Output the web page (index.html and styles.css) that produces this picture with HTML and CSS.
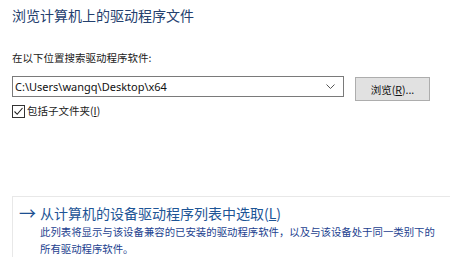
FILE: index.html
```html
<!DOCTYPE html>
<html lang="zh-CN">
<head>
    <meta charset="UTF-8">
    <title>浏览计算机上的驱动程序文件</title>
    <link rel="stylesheet" href="styles.css">
</head>
<body>
    <div class="page">
        <h1 class="title">浏览计算机上的驱动程序文件</h1>
        <div class="search">
            <label class="search-label" for="path">在以下位置搜索驱动程序软件:</label>
            <div class="search-row">
                <div class="combo">
                    <input type="text" id="path" value="C:\Users\wangq\Desktop\x64">
                    <svg class="chevron" width="9" height="6" viewBox="0 0 9 6"><path d="M0.5 0.5 L4.5 4.5 L8.5 0.5" fill="none" stroke="#555" stroke-width="1"/></svg>
                </div>
                <button class="browse-btn">浏览(<u>R</u>)...</button>
            </div>
            <label class="check">
                <span class="box"><svg width="11" height="11" viewBox="0 0 11 11"><path d="M1.5 5.5 L4.2 8.3 L9.5 2" fill="none" stroke="#222" stroke-width="1.1"/></svg></span>
                包括子文件夹(<u>I</u>)
            </label>
        </div>
        <div class="option">
            <div class="option-head">
                <span class="arrow">&#8594;</span>
                <span class="option-title">从计算机的设备驱动程序列表中选取(<u>L</u>)</span>
            </div>
            <p class="option-desc">此列表将显示与该设备兼容的已安装的驱动程序软件，以及与该设备处于同一类别下的所有驱动程序软件。</p>
        </div>
    </div>
</body>
</html>
```
FILE: styles.css
```css
body {
    margin: 0;
    background: #fff;
    font-family: "Noto Sans CJK SC", "Noto Sans", sans-serif;
    color: #1a1a1a;
}
.page {
    padding: 4px 0 0 12px;
    display: flex;
    flex-direction: column;
}
.title {
    margin: 0;
    font-size: 14px;
    font-weight: normal;
    line-height: 22px;
    color: #24406e;
}
.search {
    margin-top: 24px;
    display: flex;
    flex-direction: column;
}
.search-label {
    font-size: 10.5px;
    line-height: 16px;
}
.search-row {
    margin-top: 10px;
    display: flex;
    align-items: flex-start;
}
.combo {
    width: 320px;
    height: 19px;
    border: 1px solid #7a7a7a;
    display: flex;
    align-items: center;
    padding: 0 8px 0 2px;
    box-sizing: content-box;
}
.combo input {
    flex: 1;
    border: none;
    outline: none;
    padding: 0;
    font-family: "Noto Sans", sans-serif;
    font-size: 11px;
    color: #111;
}
.browse-btn {
    margin-left: 11px;
    margin-top: 1px;
    width: 75px;
    height: 24px;
    background: #e1e1e1;
    border: 1px solid #adadad;
    font-family: "Noto Sans CJK SC", sans-serif;
    font-size: 10.5px;
    color: #111;
    padding: 0;
}
.check {
    margin-top: 3px;
    display: flex;
    align-items: center;
    font-size: 10.5px;
    line-height: 14px;
}
.box {
    width: 11px;
    height: 11px;
    border: 1px solid #333;
    margin-right: 2px;
    display: flex;
}
.option {
    margin-top: 78px;
    border-top: 1px solid #e8e8e8;
    border-left: 1px solid #e8e8e8;
    padding: 6px 0 0 6px;
}
.option-head {
    display: flex;
    align-items: center;
}
.arrow {
    font-size: 17px;
    line-height: 20px;
    color: #1d4f91;
    width: 21px;
}
.option-title {
    font-size: 14px;
    line-height: 20px;
    color: #1d5596;
}
.option-desc {
    margin: 0 0 0 21px;
    width: 398px;
    font-size: 10.4px;
    line-height: 17px;
    color: #1c3f8f;
}
```
